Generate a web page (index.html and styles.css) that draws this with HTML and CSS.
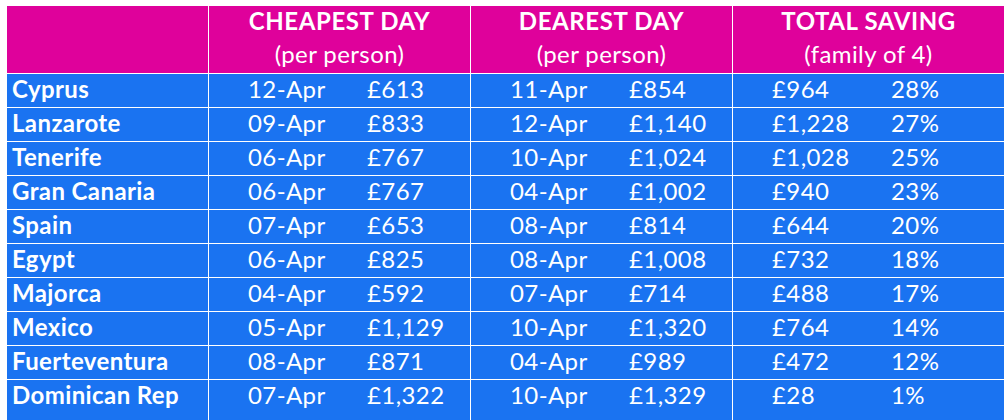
FILE: index.html
```html
<!DOCTYPE html>
<html>
<head>
<meta charset="utf-8">
<link rel="stylesheet" href="styles.css">
</head>
<body>
<div class="table">
  <div class="hcell"></div>
  <div class="hcell"><div class="ht">CHEAPEST DAY</div><div class="hs">(per person)</div></div>
  <div class="hcell"><div class="ht">DEAREST DAY</div><div class="hs">(per person)</div></div>
  <div class="hcell"><div class="ht">TOTAL SAVING</div><div class="hs">(family of 4)</div></div>

  <div class="name">Cyprus</div><div class="cell"><span>12-Apr</span><span>£613</span></div><div class="cell"><span>11-Apr</span><span>£854</span></div><div class="cell"><span>£964</span><span>28%</span></div>
  <div class="name">Lanzarote</div><div class="cell"><span>09-Apr</span><span>£833</span></div><div class="cell"><span>12-Apr</span><span>£1,140</span></div><div class="cell"><span>£1,228</span><span>27%</span></div>
  <div class="name">Tenerife</div><div class="cell"><span>06-Apr</span><span>£767</span></div><div class="cell"><span>10-Apr</span><span>£1,024</span></div><div class="cell"><span>£1,028</span><span>25%</span></div>
  <div class="name">Gran Canaria</div><div class="cell"><span>06-Apr</span><span>£767</span></div><div class="cell"><span>04-Apr</span><span>£1,002</span></div><div class="cell"><span>£940</span><span>23%</span></div>
  <div class="name">Spain</div><div class="cell"><span>07-Apr</span><span>£653</span></div><div class="cell"><span>08-Apr</span><span>£814</span></div><div class="cell"><span>£644</span><span>20%</span></div>
  <div class="name">Egypt</div><div class="cell"><span>06-Apr</span><span>£825</span></div><div class="cell"><span>08-Apr</span><span>£1,008</span></div><div class="cell"><span>£732</span><span>18%</span></div>
  <div class="name">Majorca</div><div class="cell"><span>04-Apr</span><span>£592</span></div><div class="cell"><span>07-Apr</span><span>£714</span></div><div class="cell"><span>£488</span><span>17%</span></div>
  <div class="name">Mexico</div><div class="cell"><span>05-Apr</span><span>£1,129</span></div><div class="cell"><span>10-Apr</span><span>£1,320</span></div><div class="cell"><span>£764</span><span>14%</span></div>
  <div class="name">Fuerteventura</div><div class="cell"><span>08-Apr</span><span>£871</span></div><div class="cell"><span>04-Apr</span><span>£989</span></div><div class="cell"><span>£472</span><span>12%</span></div>
  <div class="name">Dominican Rep</div><div class="cell"><span>07-Apr</span><span>£1,322</span></div><div class="cell"><span>10-Apr</span><span>£1,329</span></div><div class="cell"><span>£28</span><span>1%</span></div>
</div>
</body>
</html>
```
FILE: styles.css
```css
html, body {
  margin: 0;
  padding: 0;
  background: #ffffff;
}
body {
  padding: 6px 0 0 7px;
  font-family: "Lato", "Open Sans", sans-serif;
  color: #ffffff;
  font-size: 24px;
  letter-spacing: 0.4px;
}
.table {
  display: grid;
  grid-template-columns: 201px 261px 261px 1fr;
  grid-template-rows: 67px repeat(9, 33px) 40px;
  gap: 1px;
  background: #ffffff;
}
.hcell {
  background: #df019b;
  text-align: center;
  line-height: 30px;
}
.ht {
  font-weight: 700;
  letter-spacing: 0.6px;
}
.hs {
  font-weight: 400;
  margin-top: 3px;
}
.name {
  background: #1a73f1;
  font-weight: 700;
  padding-left: 5px;
  line-height: 29px;
}
.cell {
  background: #1a73f1;
  display: grid;
  grid-template-columns: 158px 1fr;
  align-items: start;
  line-height: 29px;
}
.cell span:first-child {
  padding-left: 39px;
}
```
